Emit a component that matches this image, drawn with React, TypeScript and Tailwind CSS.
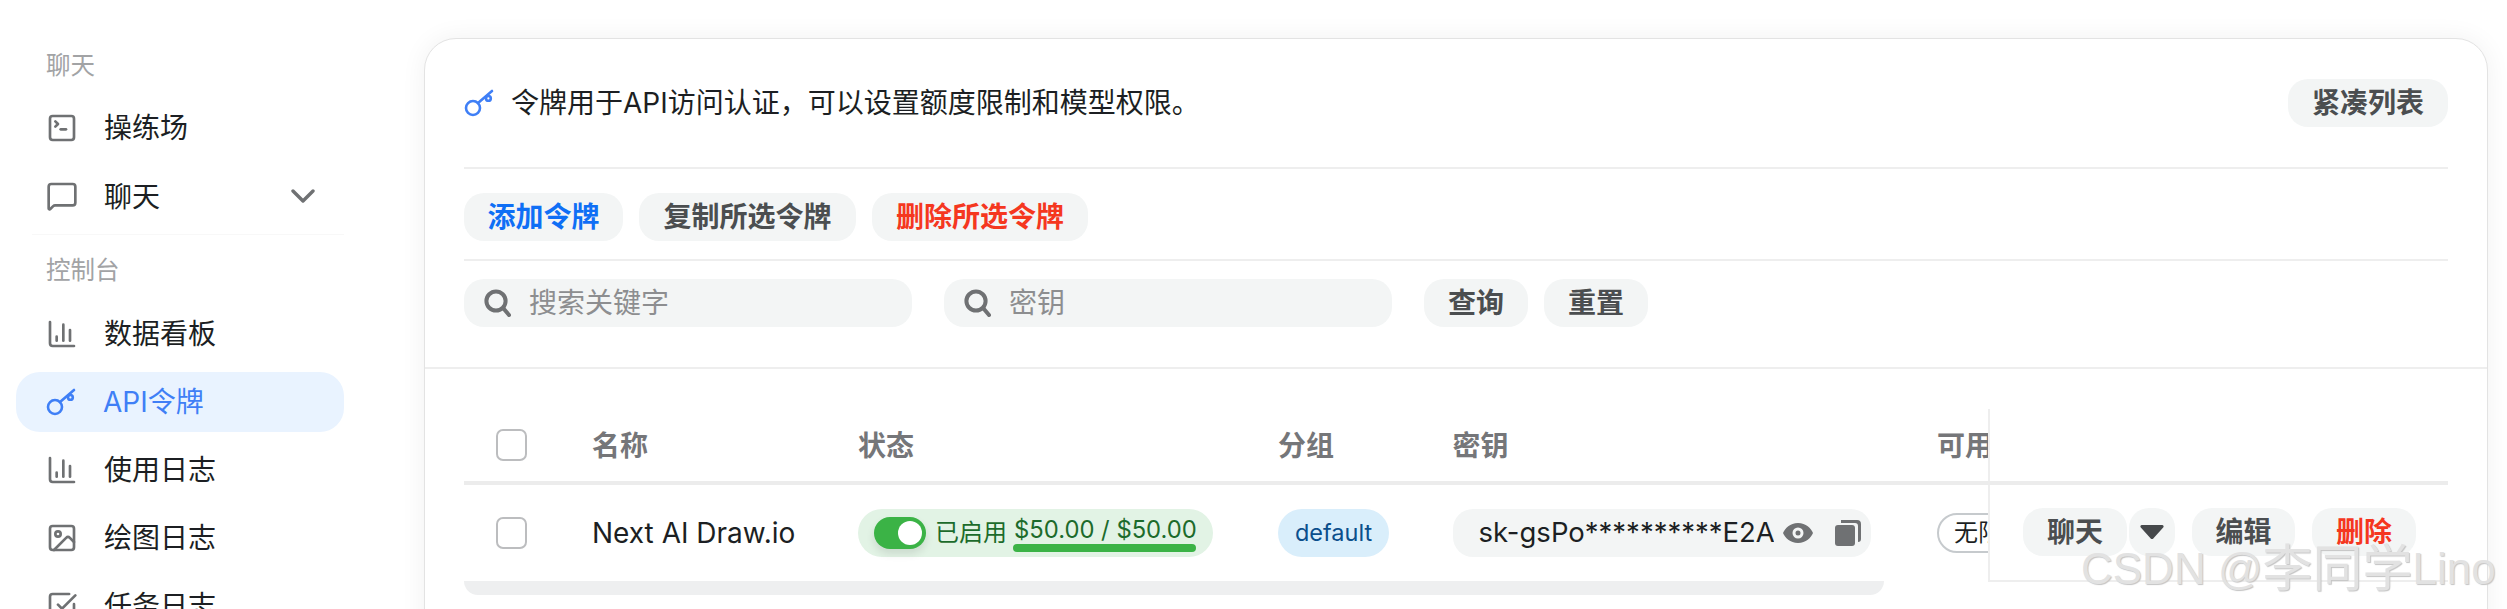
import { ChartColumn, Image, MessageSquare, SquareCheckBig, SquareTerminal } from 'lucide-react';

const KeyIcon = ({ className }: { className?: string }) => (
  <svg viewBox="0 0 30 28" fill="none" stroke="currentColor" strokeWidth="2.6" strokeLinecap="round" className={className}>
    <circle cx="9" cy="19" r="7" />
    <path d="M14 14 L28 2" />
    <circle cx="24.4" cy="9.4" r="2.4" />
  </svg>
);

const SearchIcon = () => (
  <svg viewBox="0 0 27 28" fill="none" stroke="#6f7173" strokeWidth="4" strokeLinecap="round" className="h-[28px] w-[27px] shrink-0">
    <circle cx="12" cy="12" r="9.6" />
    <path d="M19.5 19.5 L25 26" />
  </svg>
);

const navItem = 'mb-[8px] flex h-[60px] w-[328px] items-center rounded-[24px] pl-[30px] text-[28px] text-[#1c1f23]';
const labelText = 'flex h-[30px] items-center pl-[46px] text-[24.5px] text-[#a2a3a5]';
const iconBox = 'mr-[26px] h-[32px] w-[32px] shrink-0 text-[#6f7173]';
const softBtn = 'flex h-[48px] items-center justify-center rounded-[20px] bg-[#f3f5f5] text-[28px] font-bold';
const headCell = 'text-[28px] font-bold text-[#757679]';

export default function App() {
  return (
    <div className="relative flex h-[609px] w-[2507px] overflow-hidden bg-white font-['Inter','Noto_Sans_CJK_SC',sans-serif]">
      <aside className="w-[424px] shrink-0 pt-[50px]">
        <div className={labelText}>聊天</div>
        <div className="ml-[16px] mt-[18px]">
          <div className={navItem}>
            <SquareTerminal className={iconBox} strokeWidth={2} />
            操练场
          </div>
          <div className={navItem}>
            <MessageSquare className={iconBox} strokeWidth={2} />
            <span className="pt-[2px]">聊天</span>
            <svg viewBox="0 0 24 14" fill="none" stroke="#6f7173" strokeWidth="3.4" strokeLinecap="round" strokeLinejoin="round" className="ml-[131px] h-[14px] w-[24px]">
              <path d="M2 2 L12 12 L22 2" />
            </svg>
          </div>
        </div>
        <div className="ml-[32px] mt-[1px] h-[1px] w-[312px] bg-[#f8f8f8]" />
        <div className={`${labelText} mt-[20px]`}>控制台</div>
        <div className="ml-[16px] mt-[19px]">
          <div className={navItem}>
            <ChartColumn className={iconBox} strokeWidth={2} />
            数据看板
          </div>
          <div className={`${navItem} bg-[#e9f3ff] text-[#3f7ff6]`}>
            <KeyIcon className="mr-[27px] h-[28px] w-[30px] shrink-0 text-[#3f7ff6]" />
            API令牌
          </div>
          <div className={navItem}>
            <ChartColumn className={iconBox} strokeWidth={2} />
            使用日志
          </div>
          <div className={navItem}>
            <Image className={iconBox} strokeWidth={2} />
            绘图日志
          </div>
          <div className={navItem}>
            <SquareCheckBig className={iconBox} strokeWidth={2} />
            任务日志
          </div>
        </div>
      </aside>

      <main className="flex-1 pr-[19px] pt-[38px]">
        <div className="h-[640px] rounded-[32px] border border-[#e3e3e3] bg-white shadow-[0_0_26px_rgba(0,0,0,0.06)]">
          <div className="px-[39px]">
            <div className="flex items-center justify-between border-b-2 border-[#eeeeee] pb-[40px] pt-[40px]">
              <div className="flex items-center text-[28px] text-[#1c1f23]">
                <KeyIcon className="mr-[17px] h-[28px] w-[30px] text-[#3f7ff6]" />
                令牌用于API访问认证，可以设置额度限制和模型权限。
              </div>
              <div className={`${softBtn} w-[160px] text-[#4b4e50]`}>紧凑列表</div>
            </div>
            <div className="flex gap-[16px] border-b-2 border-[#eeeeee] pb-[18px] pt-[24px]">
              <div className={`${softBtn} w-[159px] text-[#0f6ff5]`}>添加令牌</div>
              <div className={`${softBtn} w-[217px] text-[#4b4e50]`}>复制所选令牌</div>
              <div className={`${softBtn} w-[216px] text-[#f5371f]`}>删除所选令牌</div>
            </div>
            <div className="flex gap-[16px] pb-[40px] pt-[18px]">
              <label className="mr-[16px] flex h-[48px] w-[448px] items-center gap-[18px] rounded-[20px] bg-[#f3f5f5] pl-[20px]">
                <SearchIcon />
                <input placeholder="搜索关键字" className="w-[380px] bg-transparent text-[28px] outline-none placeholder:text-[#8d8e90]" />
              </label>
              <label className="mr-[16px] flex h-[48px] w-[448px] items-center gap-[18px] rounded-[20px] bg-[#f3f5f5] pl-[20px]">
                <SearchIcon />
                <input placeholder="密钥" className="w-[380px] bg-transparent text-[28px] outline-none placeholder:text-[#8d8e90]" />
              </label>
              <div className={`${softBtn} w-[104px] text-[#4b4e50]`}>查询</div>
              <div className={`${softBtn} w-[104px] text-[#4b4e50]`}>重置</div>
            </div>
          </div>
          <div className="h-[2px] bg-[#eeeeee]" />

          <div className="px-[39px]">
            <div className="flex h-[116px] border-b-4 border-[#ececec]">
              <div className="flex w-[1524px] items-center overflow-hidden pt-[40px]">
                <div className="w-[128px] pl-[32px]">
                  <div className="h-[32px] w-[31px] rounded-[7px] border-[2px] border-[#bcbdbf]" />
                </div>
                <div className={`${headCell} w-[266px] pt-[2px]`}>名称</div>
                <div className={`${headCell} w-[420px] pt-[2px]`}>状态</div>
                <div className={`${headCell} w-[174.5px] pt-[2px]`}>分组</div>
                <div className={`${headCell} w-[484.5px] pt-[2px]`}>密钥</div>
                <div className={`${headCell} w-[51px] overflow-hidden whitespace-nowrap pt-[2px]`}>可用额度</div>
              </div>
              <div className="mt-[40px] flex-1 border-l-2 border-[#eeeeee]" />
            </div>

            <div className="flex h-[97px]">
              <div className="flex w-[1524px] items-center overflow-hidden pb-[1px]">
                <div className="w-[128px] shrink-0 pl-[32px]">
                  <div className="h-[32px] w-[31px] rounded-[7px] border-[2px] border-[#bcbdbf]" />
                </div>
                <div className="w-[266px] shrink-0 text-[28px] text-[#1c1f23]">Next AI Draw.io</div>
                <div className="w-[420px] shrink-0">
                  <div className="flex h-[48px] w-[355px] items-center rounded-[24px] bg-[#e2f3e5] pl-[16px] text-[#1c6b2b]">
                    <div className="relative h-[32px] w-[52px] shrink-0 rounded-full bg-[#3bb346] shadow-[0_5px_8px_rgba(0,0,0,0.1)]">
                      <div className="absolute left-[24px] top-[4px] h-[24px] w-[24px] rounded-full bg-white" />
                    </div>
                    <span className="ml-[9px] w-[78px] text-[24px]">已启用</span>
                    <div className="flex w-[183px] flex-col">
                      <span className="h-[29px] whitespace-nowrap pl-[1px] text-[23.8px] leading-[29px]">$50.00 / $50.00</span>
                      <div className="h-[8px] rounded-full bg-[#3bb346]" />
                    </div>
                  </div>
                </div>
                <div className="w-[174.5px] shrink-0">
                  <div className="flex h-[48px] w-[111px] items-center justify-center rounded-[24px] bg-[#d9eefb] text-[23.5px] text-[#0b4f8c]">default</div>
                </div>
                <div className="w-[484.5px] shrink-0">
                  <div className="flex h-[48px] w-[418.5px] items-center rounded-[20px] bg-[#f3f5f5] pl-[26px]">
                    <span className="w-[295px] overflow-hidden whitespace-nowrap text-[27.5px] text-[#1c1f23]">sk-gsPo**********E2A</span>
                    <svg viewBox="0 0 30 20" className="ml-[9px] h-[20px] w-[30px] shrink-0" fill="#6f7173" fillRule="evenodd">
                      <path d="M15 0C23 0 28 5.5 30 10 28 14.5 23 20 15 20 7 20 2 14.500 0 10 2 5.500 7 0 15 0ZM15 4.500A5.500 5.500 0 1 0 15 15.500 5.500 5.500 0 1 0 15 4.500ZM15 7.500A2.500 2.500 0 1 1 15 12.500 2.500 2.500 0 1 1 15 7.500Z" />
                    </svg>
                    <svg viewBox="0 0 26 26" className="ml-[22px] h-[26px] w-[26px] shrink-0" fill="#6f7173">
                      <rect x="0" y="5" width="20" height="21" rx="3" />
                      <path d="M6 0h16a4 4 0 0 1 4 4v15a3 3 0 0 1-3 3v-16a3 3 0 0 0-3-3H6z" />
                    </svg>
                  </div>
                </div>
                <div className="w-[51px] shrink-0">
                  <div className="flex h-[40px] w-[90px] items-center rounded-[20px] border-[2px] border-[#c6cacd] pl-[15px] text-[24px] text-[#1c1f23]">无限</div>
                </div>
              </div>
              <div className="flex flex-1 items-center border-b-2 border-l-2 border-[#eeeeee] pb-[1px] pl-[33px]">
                <div className={`${softBtn} w-[104px] text-[#4b4e50]`}>聊天</div>
                <div className="ml-[2px] flex h-[48px] w-[46px] items-center justify-center rounded-[20px] bg-[#f3f5f5]">
                  <svg viewBox="0 0 24 14" className="h-[14px] w-[24px]" fill="#46494b">
                    <path d="M2 0h20a1.500 1.500 0 0 1 1.200 2.500L13.500 13.300a2 2 0 0 1-3 0L.8 2.500A1.500 1.500 0 0 1 2 0z" />
                  </svg>
                </div>
                <div className={`${softBtn} ml-[17px] w-[103px] text-[#4b4e50]`}>编辑</div>
                <div className={`${softBtn} ml-[17px] w-[104px] text-[#f5371f]`}>删除</div>
              </div>
            </div>
            <div className="-mt-[1px] h-[14px] w-[1420px] rounded-b-[14px] bg-[#eeeff0]" />
          </div>
        </div>
      </main>

      <div className="absolute left-[2081px] top-[541px] flex items-center whitespace-nowrap font-['Liberation_Sans','Noto_Sans_CJK_SC',sans-serif] text-[44px] leading-[56px] text-[#e2e2e2] [text-shadow:1px_1px_1px_#c4c4c4]">
        CSDN @<span className="text-[50px]">李同学</span>Lino
      </div>
    </div>
  );
}
